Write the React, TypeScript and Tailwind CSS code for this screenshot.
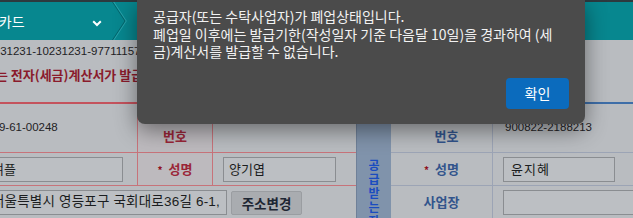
import React from 'react';

const sans = "font-[family-name:'Liberation_Sans','Noto_Sans_CJK_KR',sans-serif]";
const kr = "font-[family-name:'Noto_Sans_CJK_KR',sans-serif]";

const Field: React.FC<{ value?: string; className?: string }> = ({ value = '', className = '' }) => (
  <div className={`h-[25px] shrink-0 border border-[#8a8d91] bg-[#bcbfc3] flex items-center whitespace-nowrap overflow-hidden text-[#1b1d20] ${className}`}>
    {value}
  </div>
);

const Star = () => <span className="mr-[6px] text-[10px] font-bold text-[#8f1020]">*</span>;

export default function App() {
  return (
    <div className={`relative w-[633px] h-[218px] overflow-hidden bg-[#b9bcc0] ${sans}`}>
      {/* 상단 메뉴바 */}
      <div className="h-[2px] bg-[#2d3a3f]" />
      <div className="h-[38px] bg-[#07878f] flex items-center">
        <div className="w-[92px] overflow-hidden whitespace-nowrap">
          <span className={`block ml-[-27px] text-[14px] text-white ${kr}`}>신용카드</span>
        </div>
        <svg width="10" height="7" viewBox="0 0 10 7" className="mt-[4px]">
          <path d="M1.2 1.2 L5 5 L8.8 1.2" fill="none" stroke="white" strokeWidth="2" />
        </svg>
        <div className="w-[10px]" />
        <svg width="15" height="38" viewBox="0 0 15 38">
          <polyline points="0.5,0 13,19 0.5,38" fill="none" stroke="#05656c" strokeWidth="1" />
          <polyline points="1.8,0 14.3,19 1.8,38" fill="none" stroke="#2aa3ab" strokeWidth="1" />
        </svg>
      </div>

      {/* 안내 문구 */}
      <div className="h-[24px] flex items-center whitespace-nowrap overflow-hidden">
        <span className="ml-[-19px] text-[11.5px] text-[#1f2225]">20231231-10231231-97711157-00012345</span>
      </div>
      <div className="h-[22px] flex items-center whitespace-nowrap overflow-hidden">
        <span className={`ml-[-40px] text-[13px] font-bold text-[#8a1b2c] ${kr}`}>폐업자는 전자(세금)계산서가 발급되지 않습니다.</span>
      </div>
      <div className="h-[16px]" />

      {/* 공급자 / 공급받는자 표 */}
      <div className="flex">
        <div className="w-[356px] border-t-2 border-[#c4535d]">
          <div className="grid grid-cols-[137px_76px_143px] h-[49px] border-b border-[#c7737a]">
            <div className="flex items-center whitespace-nowrap overflow-hidden">
              <span className="ml-[-13px] text-[11.5px] text-[#1f2225]">119-61-00248</span>
            </div>
            <div className={`border-x border-[#c7737a] bg-[#bdbabe] flex flex-col items-center pt-[2px] text-[13px] leading-[17px] font-bold text-[#9a2638] ${kr}`}>
              <span>사업자등록</span>
              <span className="mt-[4px]">번호</span>
            </div>
            <div />
          </div>
          <div className="grid grid-cols-[137px_76px_143px] h-[33px] border-b border-[#c7737a]">
            <div className="flex items-center justify-end pr-[14px]">
              <Field value="여플" className={`w-[140px] pl-[8px] text-[13px] ${kr}`} />
            </div>
            <div className={`border-x border-[#c7737a] bg-[#bdbabe] flex items-center justify-center text-[13px] font-bold text-[#9a2638] ${kr}`}>
              <Star />
              <span>성명</span>
            </div>
            <div className="flex items-center pl-[10px]">
              <Field value="양기엽" className={`w-[113px] pl-[5px] text-[13px] ${kr}`} />
            </div>
          </div>
          <div className="flex items-start pt-[4px] h-[40px]">
            <Field value="서울특별시 영등포구 국회대로36길 6-1," className="w-[250px] ml-[-23px] pl-[14px] text-[13.5px] tracking-[0.2px]" />
            <button className={`ml-[4px] w-[71px] h-[24px] mt-[1px] shrink-0 rounded-[2px] border border-[#9a9da1] bg-[#a9acb0] text-[13.5px] font-bold text-[#1d2633] ${kr}`}>
              주소변경
            </button>
          </div>
        </div>

        <div className="flex-1 flex border-t-2 border-[#3e6ea8]">
          <div className={`w-[35px] shrink-0 border-l border-[#6f8098] bg-[#8093ab] pt-[54px] flex flex-col items-center text-[12px] leading-[14px] font-bold text-[#1a4cc0] ${kr}`}>
            {'공급받는자'.split('').map((c, i) => (
              <span key={i} className="h-[14px]">{c}</span>
            ))}
          </div>
          <div className="flex-1">
            <div className="grid grid-cols-[102px_1fr] h-[49px] border-b border-[#9ca4b5]">
              <div className={`border-r border-[#9ca4b5] flex flex-col items-center pt-[2px] pl-[10px] text-[13px] leading-[17px] font-bold text-[#32548c] ${kr}`}>
                <span>주민등록</span>
                <span className="mt-[4px]">번호</span>
              </div>
              <div className="flex items-center pl-[12px] text-[11.5px] text-[#1f2225]">900822-2188213</div>
            </div>
            <div className="grid grid-cols-[102px_1fr] h-[33px] border-b border-[#9ca4b5]">
              <div className={`border-r border-[#9ca4b5] flex items-center justify-center text-[13px] font-bold text-[#32548c] ${kr}`}>
                <Star />
                <span>성명</span>
              </div>
              <div className="flex items-center pl-[10px]">
                <Field value="윤지혜" className={`w-[112px] pl-[7px] tracking-[1px] text-[13px] ${kr}`} />
              </div>
            </div>
            <div className="grid grid-cols-[102px_1fr] h-[40px]">
              <div className={`border-r border-[#9ca4b5] flex items-start justify-center pt-[6px] text-[13px] font-bold text-[#32548c] ${kr}`}>
                사업장
              </div>
              <div className="flex items-start pt-[4px] pl-[10px]">
                <Field className="w-[150px]" />
              </div>
            </div>
          </div>
        </div>
      </div>

      {/* 알림 대화상자 */}
      <div className={`absolute left-[137px] top-0 w-[448px] h-[124px] flex flex-col rounded-b-[8px] bg-[#4b4b4b] px-[16px] pt-[8px] pb-[15px] shadow-[0_6px_22px_rgba(0,0,0,0.45)] ${kr}`}>
        <p className="text-[14px] leading-[17.5px] text-[#f2f2f2] whitespace-nowrap">
          공급자(또는 수탁사업자)가 폐업상태입니다.
          <br />
          폐업일 이후에는 발급기한(작성일자 기준 다음달 10일)을 경과하여 (세
          <br />
          금)계산서를 발급할 수 없습니다.
        </p>
        <div className="mt-auto flex justify-end">
          <button className="w-[63px] h-[31px] rounded-[4px] bg-[#0b6bbd] text-[14px] text-white">확인</button>
        </div>
      </div>
    </div>
  );
}
